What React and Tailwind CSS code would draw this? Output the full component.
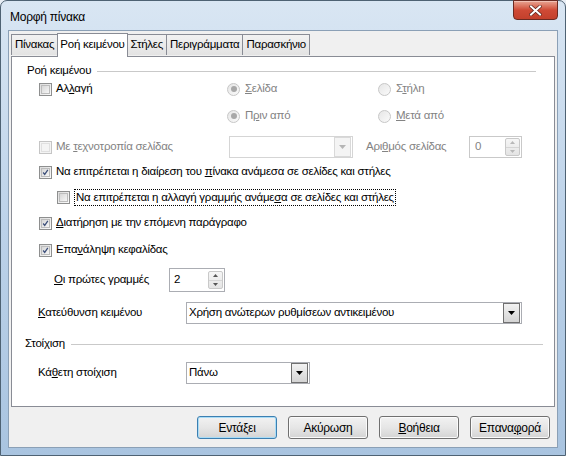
import React from 'react'

const font = { fontFamily: '"Liberation Sans", Arial, sans-serif' }

function Check({ checked, disabled }) {
  return (
    <span className={`inline-flex w-[13px] h-[13px] shrink-0 items-center justify-center border ${disabled ? 'border-[#c5c5c5] bg-[#f4f4f4]' : 'border-[#8e8f8f] bg-gradient-to-br from-[#dcdcdc] to-[#fbfbfb]'}`}>
      <span className={`w-[9px] h-[9px] border ${disabled ? 'border-[#e0e0e0]' : 'border-[#bcbcbc] bg-gradient-to-br from-[#d7d7d7] to-[#f6f6f6]'} flex items-center justify-center`}>
        {checked && (
          <svg width="9" height="9" viewBox="0 0 9 9">
            <path d="M1.5 4.5 L3.5 7 L7.5 1.2" fill="none" stroke="#3c4f7a" strokeWidth="1.6" />
          </svg>
        )}
      </span>
    </span>
  )
}

function Radio({ on }) {
  return (
    <span className="inline-flex w-[13px] h-[13px] shrink-0 items-center justify-center rounded-full border border-[#c7c7c7] bg-gradient-to-br from-[#e6e6e6] to-[#fafafa]">
      {on && <span className="w-[6px] h-[6px] rounded-full bg-[#a8a8a8]" />}
    </span>
  )
}

function SpinArrows({ disabled }) {
  const c = disabled ? '#b8b8b8' : '#555'
  return (
    <span className="flex flex-col w-[15px] h-[18px] border border-[#c9c9c9] rounded-[2px] bg-gradient-to-b from-[#f6f6f6] to-[#e4e4e4]">
      <span className="flex-1 flex items-center justify-center border-b border-[#d5d5d5]">
        <svg width="5" height="3" viewBox="0 0 5 3"><path d="M0 3 L2.5 0 L5 3Z" fill={c} /></svg>
      </span>
      <span className="flex-1 flex items-center justify-center">
        <svg width="5" height="3" viewBox="0 0 5 3"><path d="M0 0 L2.5 3 L5 0Z" fill={c} /></svg>
      </span>
    </span>
  )
}

function DropBtn({ disabled }) {
  return (
    <span className={`flex items-center justify-center w-[17px] h-[20px] border ${disabled ? 'border-[#d9d9d9] bg-[#f4f4f4]' : 'border-[#707070] bg-gradient-to-b from-[#f2f2f2] to-[#d4d4d4]'}`}>
      <svg width="7" height="4" viewBox="0 0 7 4"><path d="M0 0 L3.5 4 L7 0Z" fill={disabled ? '#b5b5b5' : '#000'} /></svg>
    </span>
  )
}

function Btn({ children, def }) {
  return (
    <button className={`w-[80px] h-[23px] rounded-[3px] border text-[12px] text-black bg-gradient-to-b from-[#f2f2f2] via-[#e6e6e6] to-[#d4d4d4] ${def ? 'border-[#3c7fb1] shadow-[inset_0_0_0_1px_#a9dcf6]' : 'border-[#707070] shadow-[inset_0_0_0_1px_#fbfbfb]'}`}>
      {children}
    </button>
  )
}

function Group({ title }) {
  return (
    <div className="flex items-center gap-[6px] h-[16px]">
      <span>{title}</span>
      <span className="flex-1 h-px bg-[#c9c9c9]" />
    </div>
  )
}

const tab = 'h-[21px] px-[3px] flex items-center border border-[#898c95] border-b-0 bg-gradient-to-b from-[#f2f2f2] to-[#e3e3e3] -ml-px mb-[1px]'

export default function App() {
  return (
    <div style={font} className="w-[566px] h-[456px] text-[11.5px] tracking-[-0.25px] text-black bg-[#e8eef5]">
      <div className="w-[566px] h-[456px] flex flex-col rounded-t-[7px] border border-[#4e6273] bg-gradient-to-b from-[#d9e6f3] via-[#bcd2e9] to-[#a9c4e0]">
        {/* title bar */}
        <div className="flex justify-between h-[29px] pl-[9px] pr-[7px]">
          <span className="pt-[7px] text-[12px]">Μορφή πίνακα</span>
          <span className="mt-[-1px] w-[45px] h-[20px] flex items-center justify-center rounded-b-[4px] border border-[#6b2a22] bg-gradient-to-b from-[#e8a493] via-[#cf4a36] to-[#c3402c] shadow-[inset_0_1px_0_#f1c0b4]">
            <svg width="13" height="11" viewBox="0 0 13 11">
              <path d="M2 1.5 L11 9.5 M11 1.5 L2 9.5" stroke="#5a2018" strokeWidth="3.4" strokeLinecap="square" />
              <path d="M2 1.5 L11 9.5 M11 1.5 L2 9.5" stroke="#fff" strokeWidth="2" strokeLinecap="square" />
            </svg>
          </span>
        </div>
        {/* client */}
        <div className="mx-[7px] h-[418px] flex flex-col bg-[#f0f0f0] border border-[#8ba0b6]">
          {/* tabs */}
          <div className="flex items-end h-[25px] pl-[3px] pt-[2px]">
            <span className={tab}>Πίνακας</span>
            <span className="h-[24px] px-[2px] pb-[2px] flex items-center border border-[#898c95] border-b-0 bg-white -ml-px -mb-px z-10">Ροή κειμένου</span>
            <span className={tab}>Στήλες</span>
            <span className={tab}>Περιγράμματα</span>
            <span className={tab}>Παρασκήνιο</span>
          </div>
          {/* panel */}
          <div className="mx-[2px] h-[351px] border border-[#898c95] bg-white pl-[15px] pr-[18px] pt-[6px] flex flex-col">
            <Group title="Ροή κειμένου" />
            <div className="pl-[12px] flex flex-col">
              <div className="flex items-center h-[20px]">
                <div className="flex items-center gap-[4px] w-[188px]">
                  <Check />
                  <span>Αλ<u>λ</u>αγή</span>
                </div>
                <div className="flex items-center gap-[5px] w-[151px] text-[#838383]">
                  <Radio on />
                  <span><u>Σ</u>ελίδα</span>
                </div>
                <div className="flex items-center gap-[5px] text-[#838383]">
                  <Radio />
                  <span>Σ<u>τ</u>ήλη</span>
                </div>
              </div>
              <div className="flex items-center h-[34px]">
                <div className="w-[188px]" />
                <div className="flex items-center gap-[5px] w-[151px] text-[#838383]">
                  <Radio on />
                  <span>Π<u>ρ</u>ιν από</span>
                </div>
                <div className="flex items-center gap-[5px] text-[#838383]">
                  <Radio />
                  <span><u>Μ</u>ετά από</span>
                </div>
              </div>
              <div className="flex items-center h-[28px]">
                <div className="flex items-center gap-[4px] w-[190px] text-[#838383]">
                  <Check disabled />
                  <span>Με <u>τ</u>εχνοτροπία σελίδας</span>
                </div>
                <div className="w-[124px] h-[22px] border border-[#d5d5d5] flex items-center justify-end pr-px">
                  <DropBtn disabled />
                </div>
                <span className="ml-[13px] w-[103px] text-[#838383]">Αρι<u>θ</u>μός σελίδας</span>
                <div className="w-[53px] h-[22px] border border-[#c9c9c9] flex items-center justify-between pl-[5px] pr-[1px] text-[#838383]">
                  <span>0</span>
                  <SpinArrows disabled />
                </div>
              </div>
              <div className="flex items-center gap-[4px] h-[22px]">
                <Check checked />
                <span>Να επιτρέπεται η διαίρεση του <u>π</u>ίνακα ανάμεσα σε σελίδες και στήλες</span>
              </div>
              <div className="flex items-center gap-[4px] h-[28px] pl-[18px]">
                <Check />
                <span className="border border-dotted border-black px-px leading-[15px]">Να επιτρέπεται η αλλαγή γραμμής ανάμε<u>σ</u>α σε σελίδες και στήλες</span>
              </div>
              <div className="flex items-center gap-[4px] h-[24px]">
                <Check checked />
                <span><u>Δ</u>ιατήρηση με την επόμενη παράγραφο</span>
              </div>
              <div className="flex items-center gap-[4px] h-[30px]">
                <Check checked />
                <span>Επα<u>ν</u>άληψη κεφαλίδας</span>
              </div>
              <div className="flex items-center h-[30px] pl-[15px]">
                <span className="w-[115px]"><u>Ο</u>ι πρώτες γραμμές</span>
                <div className="w-[56px] h-[24px] border border-[#abadb3] flex items-center justify-between pl-[4px] pr-[1px]">
                  <span>2</span>
                  <SpinArrows />
                </div>
              </div>
              <div className="flex items-center h-[36px]">
                <span className="w-[148px] -ml-[1px]"><u>Κ</u>ατεύθυνση κειμένου</span>
                <div className="w-[336px] h-[22px] border border-[#abadb3] flex items-center justify-between pl-[2px] pr-px">
                  <span>Χρήση ανώτερων ρυθμίσεων αντικειμένου</span>
                  <DropBtn />
                </div>
              </div>
            </div>
            <div className="-ml-[2px] -mr-[7px] mt-[5px]">
              <Group title="Στοίχιση" />
            </div>
            <div className="flex items-center h-[42px] pl-[11px]">
              <span className="w-[148px]">Κά<u>θ</u>ετη στοίχιση</span>
              <div className="w-[124px] h-[22px] border border-[#abadb3] flex items-center justify-between pl-[2px] pr-px">
                <span>Πάνω</span>
                <DropBtn />
              </div>
            </div>
          </div>
          {/* buttons */}
          <div className="flex justify-end gap-[11px] pr-[7px] pt-[9px]">
            <Btn def>Εντάξει</Btn>
            <Btn>Ακύρωση</Btn>
            <Btn><u>Β</u>οήθεια</Btn>
            <Btn>Επανα<u>φ</u>ορά</Btn>
          </div>
        </div>
      </div>
    </div>
  )
}
